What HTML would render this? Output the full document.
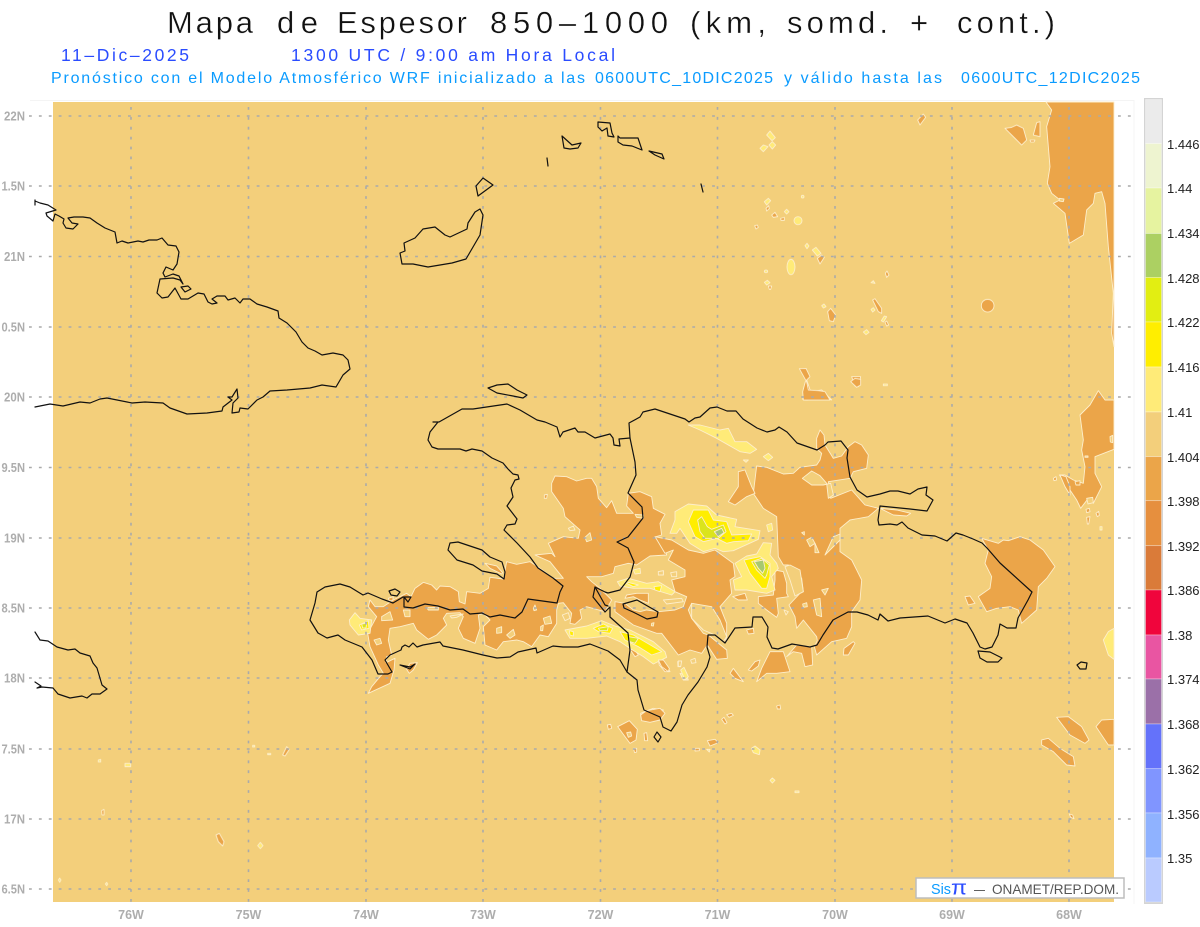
<!DOCTYPE html>
<html><head><meta charset="utf-8"><title>Mapa de Espesor</title>
<style>
html,body{margin:0;padding:0;background:#fff;width:1200px;height:927px;overflow:hidden}
svg{display:block}
.map{filter:blur(.35px)}
.o polygon,.l polygon,.y polygon,.Y polygon,.L polygon,.G polygon,ellipse{stroke:#fdeecb;stroke-width:.9;vector-effect:non-scaling-stroke;stroke-linejoin:round}
.o polygon,.o ellipse{fill:#eba549}
.l polygon,.l ellipse{fill:#f3cf7b}
.y polygon,.y ellipse{fill:#ffeb78}
.Y polygon{fill:#ffee00}
.L polygon{fill:#dbe41c}
.G polygon{fill:#a6c870}
.coast{fill:none;stroke:#111;stroke-width:1.2;stroke-linejoin:round;stroke-linecap:round}
.grid line{stroke:#aaa;stroke-width:1.6;stroke-dasharray:2.8 7.1}
text{font-family:"Liberation Sans",sans-serif}
.ax{font-size:12.5px;font-weight:bold;fill:#adadad}
.cb{font-size:13px;fill:#222}
.thin{stroke:#fff;stroke-width:.35}
</style></head><body>
<svg width="1200" height="927" viewBox="0 0 1200 927" xmlns="http://www.w3.org/2000/svg">
<rect width="1200" height="927" fill="#fff"/>
<path d="M30 100.500H1134M1134 100V904" fill="none" stroke="#f4f4f4"/>
<rect x="53" y="102" width="1061" height="800" fill="#f3cf7b"/>

<g class="map">
<!-- z2: NE orange, east blob (origin 1040,90) -->
<g transform="translate(1040 90) scale(.33333)">
<g class="o">
<polygon points="18,36 35,60 20,110 30,230 22,280 35,310 60,330 40,340 75,370 88,460 130,435 140,360 160,340 165,310 185,305 195,340 205,470 220,610 215,730 222,770 222,36"/>
<polygon points="222,930 195,930 175,902 150,945 120,975 130,1050 125,1080 135,1130 130,1180 100,1170 75,1155 58,1155 90,1200 110,1230 122,1255 145,1225 160,1240 185,1190 165,1150 165,1100 222,1078"/>
<polygon points="40,1165 48,1160 50,1170 42,1172"/>
<polygon points="105,1175 120,1172 120,1185 108,1185"/>
</g>
<g class="l"><polygon points="210,1040 218,1036 218,1058 211,1056"/><polygon points="135,1098 144,1098 144,1102 135,1102"/><polygon points="140,1225 158,1222 160,1238 144,1242"/><polygon points="58,325 72,327 70,335 58,333"/></g>
</g>
<!-- z3: Mona specks (origin 1040,500) -->
<g transform="translate(1040 500) scale(.33333)">
<g class="o">
<polygon points="50,652 85,650 125,680 147,720 135,730 90,705"/>
<polygon points="5,720 25,715 60,745 100,770 105,798 80,795 40,755 5,735"/>
<polygon points="168,680 185,660 222,658 222,735 205,735"/>
<polygon points="138,28 148,25 150,35 140,38"/>
<polygon points="168,40 176,34 178,46 172,50"/>
<polygon points="140,52 150,50 146,72 142,72"/>
<polygon points="88,942 98,945 102,956 92,952"/>
</g>
<g class="y"><polygon points="190,420 205,395 222,385 222,478 205,465"/><polygon points="180,80 186,80 186,90 180,90"/></g>
</g>

<!-- z4 group: Haiti (origin 300,380) -->
<g transform="translate(300 380) scale(.33333)">
<g class="o">
<polygon points="765,288 800,290 830,303 860,295 875,295 890,320 895,355 920,383 935,362 950,400 1000,400 980,378 985,340 1020,335 1055,350 1060,385 1095,403 1080,430 1085,465 1068,470 1095,505 1100,525 1050,528 1010,555 985,550 945,560 940,580 905,590 860,590 875,605 900,625 915,640 935,660 915,695 860,680 840,690 845,715 825,733 810,730 815,700 790,668 775,670 770,690 770,730 745,770 720,765 695,800 670,785 650,780 610,785 590,810 555,795 550,740 570,720 550,700 535,705 540,745 525,790 490,775 475,745 490,710 480,698 440,700 430,715 440,735 410,765 385,778 350,750 340,730 300,740 270,745 265,780 275,825 260,830 258,848 285,835 282,870 270,910 205,940 215,920 240,890 250,880 235,855 210,800 203,760 230,710 205,680 210,660 225,680 250,680 280,660 320,640 333,650 345,625 370,607 395,615 410,630 420,618 450,620 475,635 478,665 495,672 500,635 540,640 565,625 570,592 610,597 620,545 650,553 690,545 720,565 760,595 790,595 750,545 705,525 755,520 765,530 745,490 790,470 835,475 840,450 795,410 790,385 755,335 755,310"/>
<polygon points="555,550 590,558 608,578 605,582 570,565"/>
<polygon points="733,345 742,343 740,355 733,355"/>
<polygon points="265,655 280,650 278,662 268,662"/>
<polygon points="330,850 352,848 340,870 328,880 320,868"/>
<polygon points="1075,840 1095,850 1110,875 1095,875 1078,855"/>
<polygon points="990,808 1005,810 1015,825 1005,830"/>
<polygon points="1095,660 1140,657 1145,665 1100,670"/>
<polygon points="1022,1000 1060,985 1090,990 1075,1015 1025,1018"/>
</g>
<g class="l">
<polygon points="245,710 270,695 278,720 245,722"/>
<polygon points="222,780 240,775 245,790 230,795"/>
<polygon points="310,690 330,690 330,710 315,710"/>
<polygon points="590,745 605,740 605,758 590,760"/>
<polygon points="620,765 640,748 645,765 630,775"/>
<polygon points="700,685 705,675 710,690 702,692"/>
<polygon points="730,715 750,708 755,730 735,733"/>
<polygon points="722,740 730,735 728,752 722,752"/>
<polygon points="787,705 805,698 810,715 795,722"/>
<polygon points="855,472 870,458 875,480 860,485"/>
<polygon points="805,445 820,438 825,450 810,452"/>
<polygon points="380,683 415,682 415,690 385,690"/>
<polygon points="450,708 490,702 470,712 455,714"/>
<polygon points="1005,403 1030,405 1030,415 1010,412"/>
<polygon points="1040,700 1075,695 1070,712 1055,718"/>
<polygon points="1075,575 1090,572 1090,585 1077,585"/>
</g>
<g class="y">
<polygon points="148,720 165,698 180,715 215,720 210,760 175,765 150,735"/>
<polygon points="795,750 860,738 905,722 945,738 990,750 1060,785 1095,815 1100,832 1060,852 1030,830 990,805 960,785 920,768 860,775 810,775"/>
<polygon points="952,605 985,595 1040,610 1075,605 1125,635 1115,645 1050,625 1000,625 960,618"/>
<polygon points="1000,570 1020,565 1022,580 1005,582"/>
<polygon points="1140,880 1158,885 1165,900 1150,900"/>
<polygon points="1133,845 1141,843 1141,860 1134,860"/>
</g>
<g class="Y">
<polygon points="178,735 205,722 207,745 185,750"/>
<polygon points="880,745 910,732 938,745 930,760 895,755"/>
<polygon points="960,755 1000,765 1085,815 1055,825 1015,800 975,780"/>
<polygon points="808,752 820,755 820,768 810,765"/>
<polygon points="975,605 1015,615 1000,620 980,610"/>
<polygon points="1062,620 1085,617 1080,635 1065,630"/>
</g>
<g class="L">
<polygon points="185,732 200,730 198,744 188,744"/>
<polygon points="895,745 925,740 922,752 900,752"/>
<polygon points="985,770 1015,775 1005,790 990,785"/>
</g>
</g>

<!-- z5 group: DR (origin 620,380) -->
<g transform="translate(620 380) scale(.33333)">
<g class="o">
<polygon points="410,258 440,262 490,282 520,280 540,262 590,255 600,240 605,220 590,205 590,175 600,150 612,165 615,195 640,235 665,228 685,200 705,185 725,195 745,225 740,265 700,275 690,295 625,305 628,320 632,355 695,330 735,375 775,385 745,410 690,420 660,445 660,515 695,540 725,600 720,660 695,695 695,740 680,775 635,785 590,825 583,800 592,782 590,770 550,720 530,745 525,710 507,675 540,640 550,635 545,595 530,570 505,555 490,555 475,530 470,410 430,385 400,340"/>
<polygon points="465,570 490,575 500,610 500,640 505,650 470,655 475,700 470,712 440,690 415,670 415,650 460,645 465,600"/>
<polygon points="105,470 155,480 205,510 250,520 285,510 340,550 345,590 330,600 335,640 300,680 320,730 320,785 300,745 260,680 215,670 205,690 215,715 250,760 265,765 320,810 322,835 290,838 262,795 245,820 210,810 175,825 125,760 110,760 40,735 -15,695 -15,665 15,670 40,690 60,695 80,690 115,695 165,690 190,680 200,650 165,635 155,600 195,590 195,570 145,540 160,510 135,520"/>
<polygon points="20,645 50,640 85,640 85,670 60,660 40,650 15,655"/>
<polygon points="325,365 355,320 355,275 375,270 395,320 405,340 380,350 345,375"/>
<polygon points="548,58 560,0 572,35 605,30 635,60 605,50 560,60"/>
<polygon points="695,-10 722,-10 715,20 705,18"/>
<polygon points="338,650 375,640 382,660 355,660"/>
<polygon points="380,750 400,745 402,760 385,762"/>
<polygon points="500,830 530,795 575,800 578,855 555,860 545,820 520,815"/>
<polygon points="450,815 490,815 510,875 470,880 440,880 410,905 425,865"/>
<polygon points="385,870 405,845 420,840 415,858 395,873"/>
<polygon points="330,880 340,865 370,905 345,895"/>
<polygon points="670,825 672,805 700,785 705,790 685,825"/>
<polygon points="115,840 130,840 148,865 145,875 125,860"/>
<polygon points="1085,475 1135,490 1150,480 1165,482 1200,470 1230,480 1270,510 1305,560 1280,595 1255,620 1250,690 1205,730 1195,690 1170,680 1130,685 1100,695 1075,650 1110,625 1115,590 1095,550 1105,510"/>
<polygon points="1035,650 1050,648 1065,670 1045,675"/>
<polygon points="780,385 830,390 872,400 860,408 820,405"/>
<polygon points="1320,285 1338,290 1350,320 1350,345 1335,320"/>
</g>
<g class="l">
<polygon points="547,295 575,273 600,287 620,310 625,355 640,345 632,310 610,315 575,315"/>
<polygon points="560,480 575,472 585,490 570,500"/>
<polygon points="585,490 597,518 585,518"/>
<polygon points="615,525 640,470 660,462 660,480"/>
<polygon points="605,630 625,625 615,645"/>
<polygon points="580,660 600,655 605,710 590,705"/>
<polygon points="548,672 560,668 562,680 550,682"/>
<polygon points="492,690 505,695 498,705"/>
<polygon points="545,458 553,455 553,465"/>
<polygon points="495,560 510,555 540,570 550,635 525,648 510,600"/>
<polygon points="115,575 130,572 130,585 115,585"/>
<polygon points="152,578 170,575 170,590 155,590"/>
<polygon points="215,670 275,680 300,720 320,770 310,785 285,765 250,750 215,715"/>
<polygon points="95,730 102,728 100,738 94,737"/>
<polygon points="175,843 185,843 182,860 175,858"/>
<polygon points="212,840 225,835 228,848 215,850"/>
<polygon points="130,660 185,655 190,665 140,672"/>
</g>
<g class="y">
<polygon points="150,460 165,420 165,395 205,372 260,378 290,405 350,418 345,440 420,452 415,478 340,512 310,515 285,505 250,515 210,490 180,445 170,460"/>
<polygon points="345,550 380,528 410,522 430,488 455,490 450,525 470,550 475,565 455,590 465,630 440,640 380,630 345,630 340,600 365,590"/>
<polygon points="205,135 240,135 300,150 325,145 345,185 380,185 410,208 390,220 360,215 290,175 240,150"/>
<polygon points="430,230 445,220 458,232 445,242"/>
<polygon points="370,240 385,240 378,247"/>
<polygon points="440,435 455,430 458,450 445,455"/>
<polygon points="182,870 192,862 205,890 195,900"/>
</g>
<g class="Y">
<polygon points="205,425 220,390 265,390 280,420 320,425 335,465 395,462 385,482 340,485 320,490 290,475 250,485 225,470"/>
<polygon points="372,540 420,530 450,550 450,590 440,625 425,625 390,580"/>
</g>
<g class="L">
<polygon points="233,420 245,410 262,440 275,448 310,435 318,455 295,475 255,475 240,455"/>
<polygon points="395,545 425,535 448,555 440,585 435,595 410,570"/>
</g>
<g class="G">
<polygon points="283,455 305,445 312,458 295,470"/>
<polygon points="403,545 430,540 435,565 428,580 415,565"/>
</g>
</g>

<!-- z10 group: northern specks (origin 740,110) -->
<g transform="translate(740 110) scale(.33333)">
<g class="o">
<polygon points="795,55 815,52 830,45 850,55 860,90 845,105 825,85"/>
<polygon points="880,75 890,38 900,35 900,80"/>
<polygon points="533,30 550,12 557,22 540,45"/>
<polygon points="870,90 885,90 882,96 872,96"/>
<polygon points="95,315 105,307 113,320 100,322"/>
<polygon points="122,325 133,322 133,331 123,331"/>
<polygon points="78,295 86,287 88,296 80,303"/>
<polygon points="44,347 52,345 55,352 48,357"/>
<polygon points="232,445 245,435 253,442 240,462"/>
<polygon points="436,490 441,483 447,495 440,502"/>
<polygon points="85,528 95,528 92,538 88,538"/>
<polygon points="398,570 405,566 425,595 425,610 415,605"/>
<polygon points="263,605 272,595 287,615 280,635 268,632"/>
<ellipse cx="743" cy="587" rx="19" ry="19"/>
<polygon points="435,637 440,633 446,645 440,648"/>
<polygon points="178,776 198,775 210,800 198,812"/>
<polygon points="190,870 188,845 196,815 200,815 205,840 235,842 255,845 270,870"/>
<polygon points="332,815 345,805 362,808 362,825 350,832"/>
</g>
<g class="y">
<polygon points="80,75 90,63 106,83 96,92"/>
<polygon points="87,105 97,95 107,105 97,117"/>
<polygon points="60,115 70,105 84,110 70,125"/>
<polygon points="73,275 85,265 92,272 80,285"/>
<polygon points="133,305 140,298 147,305 140,312"/>
<ellipse cx="174" cy="332" rx="12" ry="12"/>
<ellipse cx="188" cy="260" rx="4" ry="4"/>
<polygon points="195,407 201,400 207,408 201,416"/>
<polygon points="217,420 228,412 243,430 232,438"/>
<ellipse cx="153" cy="471" rx="12" ry="23"/>
<ellipse cx="78" cy="484" rx="5" ry="4"/>
<polygon points="73,517 82,511 90,518 80,525"/>
<polygon points="393,518 400,512 405,520"/>
<polygon points="393,598 400,593 405,600 398,606"/>
<polygon points="245,587 252,582 258,590 250,594"/>
<polygon points="424,632 433,618 440,620 430,636"/>
<polygon points="370,666 380,659 387,667 378,674"/>
<polygon points="430,822 442,822 442,827 430,827"/>
</g>
</g>

<!-- z9 group: SW specks (origin 0,600) -->
<g transform="translate(0 600) scale(.33333)">
<g class="o">
<polygon points="648,705 658,700 672,725 668,738 655,725"/>
<polygon points="848,465 860,440 868,448 855,468"/>
<polygon points="305,632 312,628 312,645 306,645"/>
</g>
<g class="y">
<polygon points="375,490 392,490 392,500 375,500"/>
<polygon points="773,737 781,727 789,737 781,746"/>
<polygon points="295,480 302,478 302,486 295,486"/>
<polygon points="175,840 179,834 183,840 179,847"/>
<polygon points="316,852 320,847 323,852 320,857"/>
<polygon points="758,436 764,436 764,441 758,441"/>
<polygon points="803,460 812,460 812,464 803,464"/>
</g>
</g>

<!-- z11 group: S specks (origin 580,690) -->
<g transform="translate(580 690) scale(.33333)">
<g class="o">
<polygon points="182,75 200,62 240,55 255,70 240,90 210,97 185,92"/>
<polygon points="113,110 148,92 172,118 168,150 150,160 135,140"/>
<polygon points="82,105 92,103 95,115 85,118"/>
<polygon points="192,130 200,128 203,152 194,152"/>
<polygon points="160,175 170,175 170,186 164,188"/>
<polygon points="425,88 432,82 441,98 435,102"/>
<polygon points="440,74 455,70 460,76 447,82"/>
<polygon points="382,152 405,148 415,158 390,168"/>
<polygon points="345,175 358,175 358,182 345,183"/>
<polygon points="590,48 600,45 602,57 592,57"/>
</g>
<g class="l"><polygon points="140,128 152,126 155,138 145,142"/></g>
<g class="y">
<polygon points="514,175 525,168 540,180 538,194 520,188"/>
<polygon points="570,271 577,264 585,271 577,279"/>
<polygon points="645,303 657,303 657,308 645,308"/>
<polygon points="380,178 390,178 388,186"/>
</g>
</g>
</g>

<!-- grid -->
<g class="grid">
<line x1="29" x2="1133" y1="116" y2="116"/><line x1="29" x2="1133" y1="186" y2="186"/><line x1="29" x2="1133" y1="256.500" y2="256.500"/><line x1="29" x2="1133" y1="327" y2="327"/><line x1="29" x2="1133" y1="397" y2="397"/><line x1="29" x2="1133" y1="467.500" y2="467.500"/><line x1="29" x2="1133" y1="538" y2="538"/><line x1="29" x2="1133" y1="608" y2="608"/><line x1="29" x2="1133" y1="678" y2="678"/><line x1="29" x2="1133" y1="749" y2="749"/><line x1="29" x2="1133" y1="819" y2="819"/><line x1="29" x2="1133" y1="889" y2="889"/>
<line y1="107" y2="908" x1="131" x2="131"/><line y1="107" y2="908" x1="248.500" x2="248.500"/><line y1="107" y2="908" x1="366" x2="366"/><line y1="107" y2="908" x1="483" x2="483"/><line y1="107" y2="908" x1="600.500" x2="600.500"/><line y1="107" y2="908" x1="717.500" x2="717.500"/><line y1="107" y2="908" x1="835" x2="835"/><line y1="107" y2="908" x1="952" x2="952"/><line y1="107" y2="908" x1="1069" x2="1069"/>
</g>

<!-- coast -->
<g class="coast">
<path d="M35 201L40 203 48 205 56 210 46 213 47 216 53 221M35 205L35 200M53 221L55 214 59 216 64 219 63 223 66 228 73 229 78 224 72 223 68 218 74 217 83 217 90 218 97 223 105 228 115 232 117 243 122 241 128 243 138 241 143 242 149 240 157 240 162 238 168 245 176 246 179 252 177 264 173 270 166 267 163 273 165 277 173 274 179 276 183 284 180 280 173 278 160 279 157 293 162 298 168 297 175 288 181 299 188 299 198 293 204 294 208 302 212 304 217 303 212 299 217 296 225 296 228 300 235 298 240 303 243 299 250 299 257 304 267 307 278 311 279 318 287 323 296 332 302 342 308 348 315 351 322 355 333 353 343 355 348 360 350 369 343 375 336 387 322 385 310 388 287 390 270 391 263 397 257 400 248 409 240 408 239 412 232 413 233 403 238 398 237 389 232 397 228 397 232 400 223 407 222 411 207 413 187 414 170 408 163 403 145 402 132 403 107 398 100 399 90 403 80 402 63 406 50 404 35 407"/>
<path d="M181 287L188 286 191 289 185 292Z"/>
<path d="M35 632L40 640 48 641 57 647 68 650 75 649 80 653 90 656 93 663 97 668 102 685 107 689 100 694 92 694 87 698 82 696 70 698 58 694 53 688 42 687 37 688 41 686 35 682"/>
<path d="M480 209L483 215 480 235 466 259 452 263 428 267 413 264 402 264 400 253 405 251 404 243 415 238 423 229 435 227 445 235 450 237 467 229 468 223 475 212Z"/>
<path d="M483 178L493 185 478 196 476 186Z"/>
<path d="M562 136L572 145 581 143 578 148 570 149 564 148Z"/>
<path d="M547 158L548 166"/>
<path d="M598 122L610 123 612 133 614 137 608 136 607 128 602 131 598 127Z"/>
<path d="M618 136L620 138 638 138 642 150 632 146 623 145 618 142Z"/>
<path d="M649 151L662 154 664 159 655 155Z"/>
<path d="M701 184L703 192"/>
<path d="M488 388L497 385 508 384 517 390 527 395 523 398 513 396 497 393Z"/>
<path d="M433 422L439 422 462 409 473 409 507 404 520 410 537 420 545 422 557 427 560 437 563 432 575 428 578 432 585 432 595 438 610 434 613 438 614 445 620 446 619 439 630 438 629 423 640 417 643 412 655 409 670 414 685 419 689 422 695 418 700 417 710 408 717 407 727 411 736 411 743 419 757 428 767 432 775 430 779 427 787 432 797 443 817 450 825 445 828 442 841 441 848 450 847 458 850 477 857 490 867 497 880 494 890 491 898 491 910 494 918 489 927 487 926 495 933 500 927 511 910 509 880 506 878 520 879 525 890 524 897 525 902 522 908 528 922 535 935 536 947 541 956 533 963 535 973 539 982 543 987 548 1000 563 1032 592 1028 600 1018 618 1016 628 1007 628 1000 624 998 635 992 647 985 649 980 647 973 633 967 623 955 619 945 623 928 616 900 618 888 621 880 614 878 620 868 615 857 612 848 612 833 620 823 635 817 645 810 647 792 644 778 649 772 648 767 637 768 627 762 617 753 617 752 627 735 628 725 643 715 635 708 635 707 647 710 657 707 667 698 682 688 695 682 705 677 722 671 731 663 727 660 717 644 710 638 690 637 680 627 672 620 660 608 651 590 644 578 647 563 647 553 646 537 653 536 648 518 652 510 657 497 658 483 655 463 650 443 646 440 642 423 645 417 647 413 643 409 647 405 645 402 647 401 650 390 655 385 660 392 672 388 674 378 674 372 660 362 647 345 640 338 635 327 638 318 633 310 620 315 603 317 592 325 587 340 584 350 587 363 595 368 593 382 599 393 603 403 597 411 597 408 602 404 597 404 607 413 608 425 604 438 606 450 610 463 609 470 614 482 613 490 617 500 615 515 618 522 612 528 599 557 603 560 592 563 586 553 578 538 568 530 557 517 543 504 530 507 525 515 524 517 519 507 506 513 497 511 488 515 480 519 479 518 475 513 474 508 469 503 463 492 458 482 451 472 449 466 451 460 449 438 449 432 447 428 440 430 432 438 422 433 422"/>
<path d="M630 438L635 462 636 475 628 493 642 507 643 518 628 537 617 542 628 548 634 562 630 577 620 590 608 593 605 592 595 587 593 597 605 612 610 607 610 617 628 633 630 650 627 672"/>
<path d="M595 587L605 605 608 606"/>
<path d="M623 604L637 600 658 612 657 617 647 619 633 612 624 608Z"/>
<path d="M450 543L458 542 482 550 490 557 502 562 505 572 504 579 497 574 482 571 473 565 457 560 448 550Z"/>
<path d="M400 665L410 667 415 664 410 669Z"/>
<path d="M389 591L395 589 400 592 397 596 391 595Z"/>
<path d="M978 651L990 652 1002 658 998 662 987 662 980 658Z"/>
<path d="M657 732L661 737 658 742 654 737Z"/>
<path d="M1077 665L1081 662 1087 663 1086 669 1080 669Z"/>
</g>

<!-- legend box -->
<rect x="916" y="878" width="208" height="20" fill="#fff" stroke="#bdbdbd" stroke-width="1.500"/>
<text x="931" y="894" font-size="15" fill="#0a9bff" textLength="20" lengthAdjust="spacingAndGlyphs">Sis</text>
<text x="951" y="894.500" font-size="20" fill="#2a4cff" textLength="16" lengthAdjust="spacingAndGlyphs">π</text>
<text x="974" y="894" font-size="14" fill="#555" textLength="11" lengthAdjust="spacingAndGlyphs">–</text>
<text x="992" y="894" font-size="14" fill="#555" textLength="127" lengthAdjust="spacingAndGlyphs">ONAMET/REP.DOM.</text>

<!-- colourbar -->
<rect x="1144" y="98" width="19" height="806" fill="#d4d4d4"/>
<g stroke="#fff" stroke-opacity=".45" stroke-width=".7">
<rect x="1145.500" y="99.500" width="16" height="44" fill="#ebebeb"/>
<rect x="1145.500" y="143.500" width="16" height="44.500" fill="#eef4d0"/>
<rect x="1145.500" y="188" width="16" height="45.500" fill="#e6f3a0"/>
<rect x="1145.500" y="233.500" width="16" height="44" fill="#acd062"/>
<rect x="1145.500" y="277.500" width="16" height="44.500" fill="#e2ee12"/>
<rect x="1145.500" y="322" width="16" height="45" fill="#ffee00"/>
<rect x="1145.500" y="367" width="16" height="45" fill="#ffeb78"/>
<rect x="1145.500" y="412" width="16" height="44.700" fill="#f3cf7b"/>
<rect x="1145.500" y="456.700" width="16" height="44" fill="#eba549"/>
<rect x="1145.500" y="500.700" width="16" height="45" fill="#e68f3e"/>
<rect x="1145.500" y="545.700" width="16" height="44.300" fill="#da7b39"/>
<rect x="1145.500" y="590" width="16" height="45" fill="#f0053c"/>
<rect x="1145.500" y="635" width="16" height="44" fill="#e955a2"/>
<rect x="1145.500" y="679" width="16" height="45" fill="#9b70a8"/>
<rect x="1145.500" y="724" width="16" height="44.700" fill="#6472fa"/>
<rect x="1145.500" y="768.700" width="16" height="44.300" fill="#8095ff"/>
<rect x="1145.500" y="813" width="16" height="45" fill="#8fb2ff"/>
<rect x="1145.500" y="858" width="16" height="44" fill="#bacbff"/>
</g>
<g class="cb">
<text x="1167" y="149">1.446</text><text x="1167" y="193">1.44</text><text x="1167" y="238">1.434</text><text x="1167" y="283">1.428</text><text x="1167" y="327">1.422</text><text x="1167" y="372">1.416</text><text x="1167" y="417">1.41</text><text x="1167" y="462">1.404</text><text x="1167" y="506">1.398</text><text x="1167" y="551">1.392</text><text x="1167" y="595">1.386</text><text x="1167" y="640">1.38</text><text x="1167" y="684">1.374</text><text x="1167" y="729">1.368</text><text x="1167" y="774">1.362</text><text x="1167" y="819">1.356</text><text x="1167" y="863">1.35</text>
</g>

<!-- axis labels -->
<g class="ax">
<text x="4" y="120.500" textLength="21" lengthAdjust="spacingAndGlyphs">22N</text><text x="1.500" y="190.500" textLength="23.500" lengthAdjust="spacingAndGlyphs">1.5N</text><text x="4" y="261" textLength="21" lengthAdjust="spacingAndGlyphs">21N</text><text x="1.500" y="331.500" textLength="23.500" lengthAdjust="spacingAndGlyphs">0.5N</text><text x="4" y="401.500" textLength="21" lengthAdjust="spacingAndGlyphs">20N</text><text x="1.500" y="472" textLength="23.500" lengthAdjust="spacingAndGlyphs">9.5N</text><text x="4" y="542.500" textLength="21" lengthAdjust="spacingAndGlyphs">19N</text><text x="1.500" y="612.500" textLength="23.500" lengthAdjust="spacingAndGlyphs">8.5N</text><text x="4" y="682.500" textLength="21" lengthAdjust="spacingAndGlyphs">18N</text><text x="1.500" y="753.500" textLength="23.500" lengthAdjust="spacingAndGlyphs">7.5N</text><text x="4" y="823.500" textLength="21" lengthAdjust="spacingAndGlyphs">17N</text><text x="1.500" y="893.500" textLength="23.500" lengthAdjust="spacingAndGlyphs">6.5N</text>
</g>
<g class="ax" text-anchor="middle">
<text x="131" y="919">76W</text><text x="248.500" y="919">75W</text><text x="366" y="919">74W</text><text x="483" y="919">73W</text><text x="600.500" y="919">72W</text><text x="717.500" y="919">71W</text><text x="835" y="919">70W</text><text x="952" y="919">69W</text><text x="1069" y="919">68W</text>
</g>

<!-- titles -->
<g class="thin" font-size="31" fill="#111">
<text x="167" y="33" textLength="86" lengthAdjust="spacing">Mapa</text>
<text x="277" y="33" textLength="41" lengthAdjust="spacing">de</text>
<text x="337" y="33" textLength="130" lengthAdjust="spacing">Espesor</text>
<text x="490" y="33" textLength="178" lengthAdjust="spacing">850–1000</text>
<text x="690" y="33" textLength="76" lengthAdjust="spacing">(km,</text>
<text x="787" y="33" textLength="101" lengthAdjust="spacing">somd.</text>
<text x="910" y="33" textLength="22" lengthAdjust="spacing">+</text>
<text x="957" y="33" textLength="98" lengthAdjust="spacing">cont.)</text>
</g>
<text x="61" y="61" font-size="17.500" fill="#2a4cff" textLength="128" lengthAdjust="spacing">11–Dic–2025</text>
<text x="291" y="61" font-size="17.500" fill="#2a4cff" textLength="324" lengthAdjust="spacing">1300 UTC / 9:00 am Hora Local</text>
<g font-size="16" fill="#0a9bff">
<text x="51" y="83" textLength="534" lengthAdjust="spacing">Pronóstico con el Modelo Atmosférico WRF inicializado a las</text>
<text x="595" y="83" textLength="178" lengthAdjust="spacing">0600UTC_10DIC2025</text>
<text x="784" y="83" textLength="158" lengthAdjust="spacing">y válido hasta las</text>
<text x="961" y="83" textLength="179" lengthAdjust="spacing">0600UTC_12DIC2025</text>
</g>
</svg>
</body></html>
